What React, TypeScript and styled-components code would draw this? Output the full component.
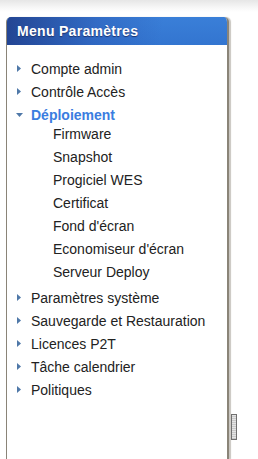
import React from "react";
import styled, { createGlobalStyle } from "styled-components";

const GlobalStyle = createGlobalStyle`
  html, body {
    margin: 0;
    padding: 0;
    background: #ffffff;
    overflow: hidden;
  }
  body {
    font-family: "Liberation Sans", Arial, sans-serif;
  }
`;

const TopStrip = styled.div`
  height: 12px;
  background: linear-gradient(to bottom, #e6e6e6 0%, #f6f6f6 60%, #ffffff 100%);
`;

const Page = styled.div`
  display: flex;
  flex-direction: row;
  align-items: stretch;
  padding: 5px 0 0 6px;
  height: 447px;
  box-sizing: border-box;
`;

const Panel = styled.div`
  width: 220px;
  border-left: 1px solid #8a8478;
  border-right: 2px solid #8a8478;
  border-radius: 5px 5px 0 0;
  box-shadow: 2px 0 1px #c9c6c0;
  background: #ffffff;
  overflow: hidden;
`;

const Header = styled.div`
  height: 28px;
  display: flex;
  align-items: center;
  padding-left: 10px;
  color: #ffffff;
  font-weight: bold;
  font-size: 14px;
  letter-spacing: 0.3px;
  text-shadow: 0 1px 1px #1b326e;
  background:
    linear-gradient(100deg, rgba(30, 55, 130, 0.8) 0%, rgba(40, 80, 170, 0.4) 40%, rgba(60, 120, 215, 0) 70%),
    linear-gradient(to bottom, #3a7fd8 0%, #3375d0 100%);
`;

const List = styled.ul`
  list-style: none;
  margin: 0;
  padding: 12px 0 0 0;
`;

const Item = styled.li<{ $open?: boolean }>`
  display: flex;
  align-items: center;
  height: 23px;
  padding-left: 9px;
  font-size: 14px;
  color: ${(p) => (p.$open ? "#3a7de0" : "#222222")};
  font-weight: ${(p) => (p.$open ? "bold" : "normal")};
`;

const Arrow = styled.span`
  width: 15px;
  display: flex;
  align-items: center;
  justify-content: flex-start;
`;

const SubList = styled.ul`
  list-style: none;
  margin: -4px 0 3px 0;
  padding: 0;
`;

const SubItem = styled.li`
  height: 23px;
  display: flex;
  align-items: center;
  padding-left: 46px;
  font-size: 14px;
  color: #222222;
`;

const ScrollTrack = styled.div`
  padding-top: 397px;
  padding-left: 2px;
`;

const Thumb = styled.div`
  width: 4px;
  height: 24px;
  border: 1px solid #707070;
  background: repeating-linear-gradient(to bottom, #e4e4e4 0px, #e4e4e4 1px, #c8c8c8 1px, #c8c8c8 2px);
`;

function Caret({ open }: { open?: boolean }) {
  return open ? (
    <svg width="8" height="6" viewBox="0 0 8 6">
      <polygon points="0,1 7,1 3.5,5" fill="#4f78a8" />
    </svg>
  ) : (
    <svg width="6" height="9" viewBox="0 0 6 9">
      <polygon points="1,1 5,4.5 1,8" fill="#4f78a8" />
    </svg>
  );
}

const before = ["Compte admin", "Contrôle Accès"];
const subs = [
  "Firmware",
  "Snapshot",
  "Progiciel WES",
  "Certificat",
  "Fond d'écran",
  "Economiseur d'écran",
  "Serveur Deploy",
];
const after = [
  "Paramètres système",
  "Sauvegarde et Restauration",
  "Licences P2T",
  "Tâche calendrier",
  "Politiques",
];

export default function App() {
  return (
    <>
      <GlobalStyle />
      <TopStrip />
      <Page>
        <Panel>
          <Header>Menu Paramètres</Header>
          <List>
            {before.map((label) => (
              <Item key={label}>
                <Arrow>
                  <Caret />
                </Arrow>
                {label}
              </Item>
            ))}
            <Item $open>
              <Arrow>
                <Caret open />
              </Arrow>
              Déploiement
            </Item>
            <SubList>
              {subs.map((label) => (
                <SubItem key={label}>{label}</SubItem>
              ))}
            </SubList>
            {after.map((label) => (
              <Item key={label}>
                <Arrow>
                  <Caret />
                </Arrow>
                {label}
              </Item>
            ))}
          </List>
        </Panel>
        <ScrollTrack>
          <Thumb />
        </ScrollTrack>
      </Page>
    </>
  );
}
